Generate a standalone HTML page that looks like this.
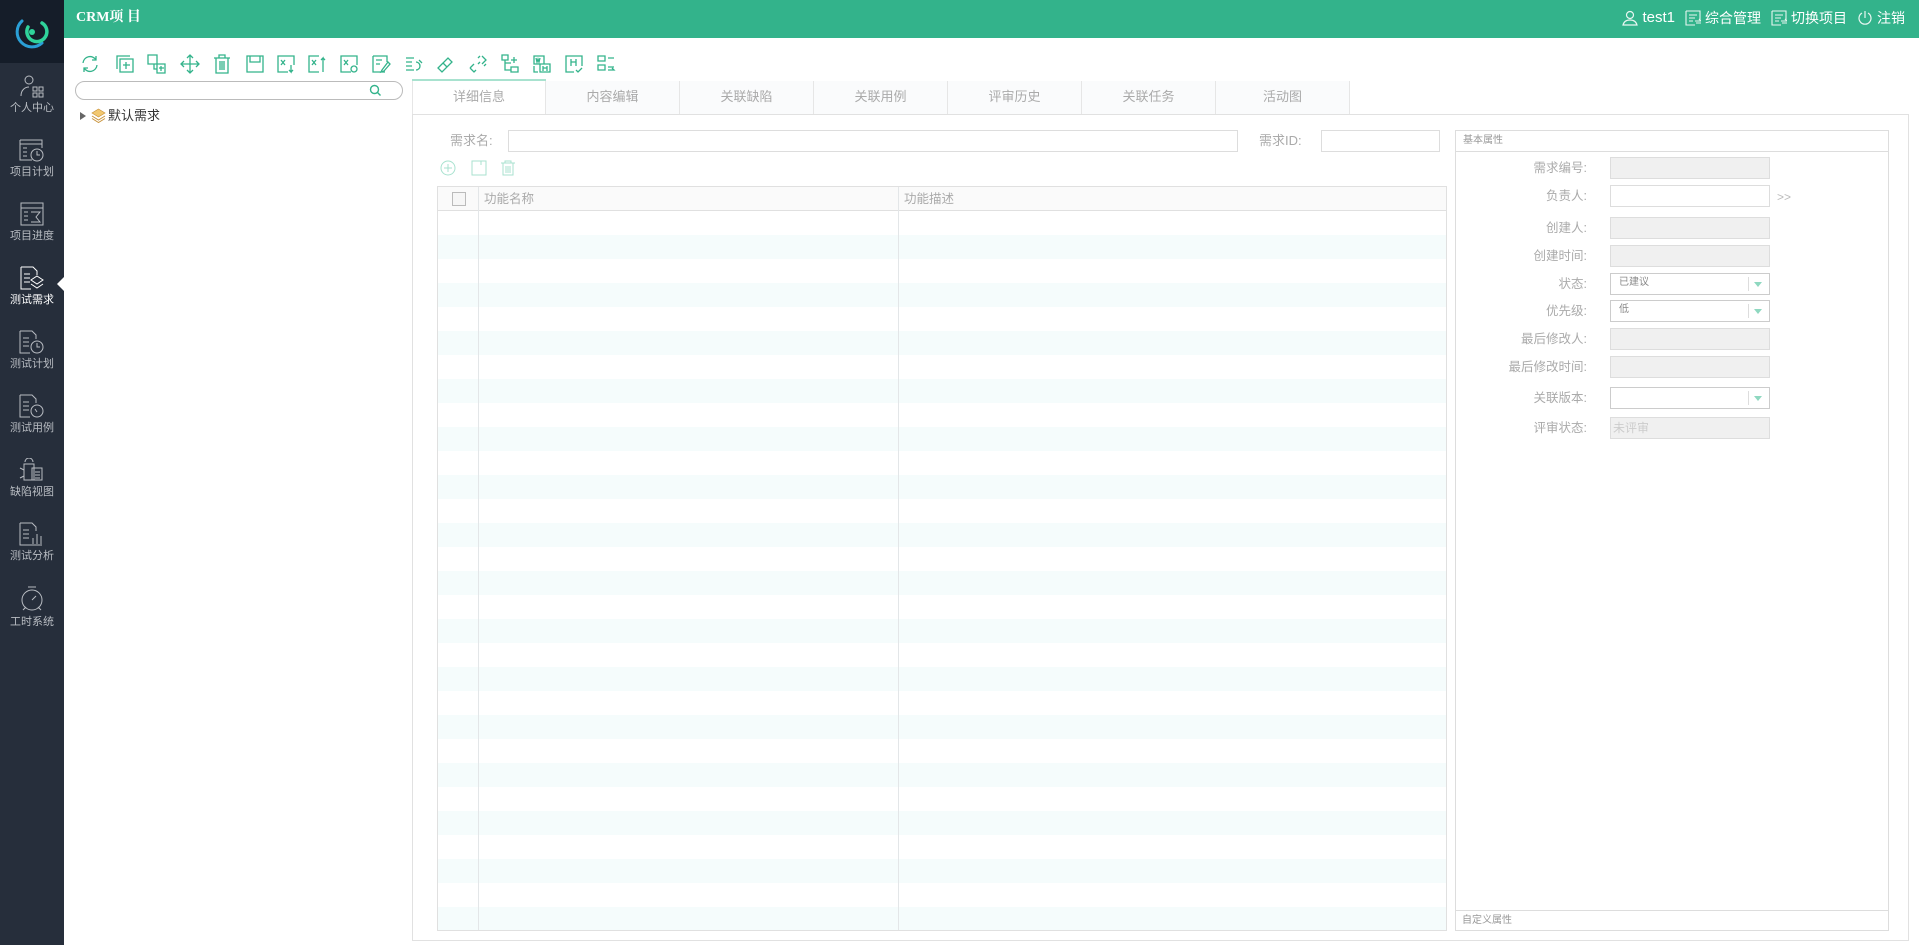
<!DOCTYPE html>
<html><head><meta charset="utf-8"><style>
*{margin:0;padding:0;box-sizing:border-box}
body{width:1919px;height:945px;position:relative;overflow:hidden;background:#fff;font-family:"Liberation Sans","Noto Sans CJK SC",sans-serif;font-size:12px;color:#999}
.a{position:absolute}
#hdr{left:0;top:0;width:1919px;height:38px;background:#33b38b}
#side{left:0;top:0;width:64px;height:945px;background:#262e3b}
#logo{left:0;top:0;width:64px;height:63px;background:#151d29}
.si{position:absolute;left:0;width:64px;text-align:center;color:#b8bcc2;font-size:11px;line-height:14px}
.si svg{display:block;margin:0 auto 3px}
.tb svg{position:absolute;top:54px}
.tab{position:absolute;top:81px;height:33px;width:134px;border-right:1px solid #e6e6e6;background:#fafbfc;text-align:center;line-height:31px;color:#aaa;font-size:13px}
.lab{position:absolute;text-align:right;width:120px;color:#aaa;font-size:12.5px;line-height:16px}
.inp{position:absolute;left:1610px;width:160px;height:22px;border:1px solid #ddd;background:#f0f0f0}
.sel{background:#fff;border-color:#ccc;font-size:10px;color:#888;padding-left:8px;line-height:18px}
.sel:after{content:"";position:absolute;right:0;top:3px;width:20px;height:14px;border-left:1px solid #ddd}
.sel i{position:absolute;right:7px;top:8px;border-left:4px solid transparent;border-right:4px solid transparent;border-top:5px solid #8fd8c0}
</style></head><body>
<div id="hdr" class="a"></div>
<div class="a" style="left:76px;top:9px;color:#fff;font-weight:bold;font-size:14px;line-height:18px;font-family:'Liberation Serif','Noto Serif CJK SC',serif">CRM项 目</div>
<div class="a" style="right:14px;top:9px;color:#fff;font-size:14px;line-height:18px;display:flex;align-items:center;gap:4px;white-space:nowrap">
<svg width="16" height="16" viewBox="0 0 16 16" fill="none" stroke="#e8f6f1" stroke-width="1.2"><circle cx="8" cy="5" r="3.5"/><path d="M1 15c1-4 4-5 7-5s6 1 7 5z"/></svg><span style="font-size:15px">test1</span>
<svg style="margin-left:6px" width="16" height="16" viewBox="0 0 16 16" fill="none" stroke="#e8f6f1" stroke-width="1.1"><path d="M1 1h14v9M1 1v14h9M4 5h8M4 8h6M4 11h4M10 11h6l-2-2M16 13h-5"/></svg><span>综合管理</span>
<svg style="margin-left:6px" width="16" height="16" viewBox="0 0 16 16" fill="none" stroke="#e8f6f1" stroke-width="1.1"><path d="M1 1h14v9M1 1v14h9M4 5h8M4 8h6M4 11h4M10 11h6l-2-2M16 13h-5"/></svg><span>切换项目</span>
<svg style="margin-left:6px" width="16" height="16" viewBox="0 0 16 16" fill="none" stroke="#e8f6f1" stroke-width="1.2"><path d="M5 3a6 6 0 1 0 6 0M8 1v7"/></svg><span>注销</span></div>

<div id="side" class="a"></div>
<div id="logo" class="a"><svg style="position:absolute;left:14px;top:13px" width="36" height="36" viewBox="0 0 36 36" fill="none" stroke-linecap="round"><path d="M8 8a14 14 0 0 0 20 22" stroke="#2a9fd6" stroke-width="3"/><path d="M28 10a10 10 0 1 1-14 4" stroke="#2fd39b" stroke-width="3.5"/><circle cx="18" cy="19" r="3" fill="#2fd39b" stroke="none"/></svg></div>
<div class="si" style="top:74px"><svg width="24" height="24" viewBox="0 0 24 24" fill="none" stroke="#b8bcc2"><circle cx="9" cy="6" r="4"/><path d="M1 22c0-6 4-9 8-9M13 13h4v4h-4zM19 13h4v4h-4zM13 19h4v4h-4zM19 19h4v4h-4z"/></svg>个人中心</div>
<div class="si" style="top:138px"><svg width="26" height="24" viewBox="0 0 26 24" fill="none" stroke="#b8bcc2"><path d="M1 2h22v8M1 2v20h12M1 6h22M4 10h4M4 14h4M4 18h4"/><circle cx="18" cy="17" r="6"/><path d="M18 13v4h3"/></svg>项目计划</div>
<div class="si" style="top:202px"><svg width="24" height="24" viewBox="0 0 24 24" fill="none" stroke="#b8bcc2"><path d="M1 1h22v22H1zM1 6h22M4 10h4M4 14h4M4 18h4M11 10h9l-4 5 4 5h-9"/></svg>项目进度</div>
<div class="si" style="top:266px;color:#fff"><svg width="24" height="24" viewBox="0 0 24 24" fill="none" stroke="#fff"><path d="M1 1h12l4 4v4M1 1v22h10M4 8h6M4 12h6M4 16h6M17 10l6 4-6 4-6-4zM11 18l6 4 6-4"/></svg>测试需求</div>
<div class="a" style="left:57px;top:277px;border-top:7px solid transparent;border-bottom:7px solid transparent;border-right:7px solid #fff"></div>
<div class="si" style="top:330px"><svg width="26" height="24" viewBox="0 0 26 24" fill="none" stroke="#b8bcc2"><path d="M1 1h12l4 4v4M1 1v22h10M4 8h6M4 12h6M4 16h6"/><circle cx="18" cy="17" r="6"/><path d="M18 13v4h3"/></svg>测试计划</div>
<div class="si" style="top:394px"><svg width="26" height="24" viewBox="0 0 26 24" fill="none" stroke="#b8bcc2"><path d="M1 1h12l4 4v4M1 1v22h10M4 8h6M4 12h6M4 16h6"/><circle cx="18" cy="17" r="6"/><path d="M16 15l2 3"/></svg>测试用例</div>
<div class="si" style="top:458px"><svg width="26" height="24" viewBox="0 0 26 24" fill="none" stroke="#b8bcc2"><path d="M6 4a4 4 0 0 1 8 0M5 6h10v16H5zM1 10l4 2M1 20l4-2M13 10h10v12H13zM16 14h5M16 17h5M16 20h5"/></svg>缺陷视图</div>
<div class="si" style="top:522px"><svg width="26" height="24" viewBox="0 0 26 24" fill="none" stroke="#b8bcc2"><path d="M1 1h12l4 4v4M1 1v22h22M4 8h6M4 12h6M4 16h6M14 22v-6M18 22V12M22 22v-8"/></svg>测试分析</div>
<div class="si" style="top:586px"><svg width="26" height="26" viewBox="0 0 26 26" fill="none" stroke="#b8bcc2"><circle cx="13" cy="14" r="10"/><path d="M13 14l4-4M9 1h8M4 24l3-3M22 24l-3-3"/></svg>工时系统</div>

<div class="tb" style="position:absolute;left:0;top:0">
<svg style="left:80px" width="20" height="20" viewBox="0 0 20 20" fill="none" stroke="#33b38b" stroke-width="1.3"><path d="M3 9a7 7 0 0 1 13-3M17 11a7 7 0 0 1-13 3M16 2v4h-4M4 18v-4h4"/></svg>
<svg style="left:115px" width="20" height="20" viewBox="0 0 20 20" fill="none" stroke="#33b38b" stroke-width="1.3"><path d="M2 15V2h13M5 5h13v13H5zM11 8v7M8 11h7"/></svg>
<svg style="left:147px" width="20" height="20" viewBox="0 0 20 20" fill="none" stroke="#33b38b" stroke-width="1.3"><path d="M1 1h9v9H1zM10 10h8v9h-8zM14 12v5M12 14h5M7 10v5h3"/></svg>
<svg style="left:180px" width="20" height="20" viewBox="0 0 20 20" fill="none" stroke="#33b38b" stroke-width="1.3"><path d="M10 1v18M1 10h18M7 4l3-3 3 3M7 16l3 3 3-3M4 7l-3 3 3 3M16 7l3 3-3 3"/></svg>
<svg style="left:212px" width="20" height="20" viewBox="0 0 20 20" fill="none" stroke="#33b38b" stroke-width="1.3"><path d="M2 4h16M7 4V1h6v3M4 4v15h12V4M8 7v9M10 7v9M12 7v9"/></svg>
<svg style="left:245px" width="20" height="20" viewBox="0 0 20 20" fill="none" stroke="#33b38b" stroke-width="1.3"><path d="M2 2h16v16H2zM5 2v6h10V2"/></svg>
<svg style="left:276px" width="20" height="20" viewBox="0 0 20 20" fill="none" stroke="#33b38b" stroke-width="1.3"><path d="M12 18H2V2h16v9M5 6l4 5M9 6l-4 5M15 11v7l-2-2M15 18l2-2"/></svg>
<svg style="left:307px" width="20" height="20" viewBox="0 0 20 20" fill="none" stroke="#33b38b" stroke-width="1.3"><path d="M12 18H2V2h10M5 6l4 5M9 6l-4 5M16 18V4l-2 2M16 4l2 2"/></svg>
<svg style="left:339px" width="20" height="20" viewBox="0 0 20 20" fill="none" stroke="#33b38b" stroke-width="1.3"><path d="M12 18H2V2h16v9M5 6l4 5M9 6l-4 5"/><circle cx="15" cy="15" r="3"/></svg>
<svg style="left:371px" width="20" height="20" viewBox="0 0 20 20" fill="none" stroke="#33b38b" stroke-width="1.3"><path d="M2 2h14v6M2 2v16h12M5 6h6M5 10h4M11 16l6-8 2 2-6 7-3 1z"/></svg>
<svg style="left:404px" width="20" height="20" viewBox="0 0 20 20" fill="none" stroke="#33b38b" stroke-width="1.3"><path d="M2 4h8M2 8h6M2 12h6M2 16h8M12 8a4 4 0 1 1 0 8M15 6l3 3"/></svg>
<svg style="left:436px" width="20" height="20" viewBox="0 0 20 20" fill="none" stroke="#33b38b" stroke-width="1.3"><path d="M2 14l10-10 4 4-10 10zM7 9l4 4"/></svg>
<svg style="left:468px" width="20" height="20" viewBox="0 0 20 20" fill="none" stroke="#33b38b" stroke-width="1.3"><path d="M2 14l4-4M8 16l-2 2-4-4M14 2l4 4-4 4M12 8l-2 2M10 4l2-2M16 12l2-2"/></svg>
<svg style="left:500px" width="20" height="20" viewBox="0 0 20 20" fill="none" stroke="#33b38b" stroke-width="1.3"><path d="M2 1h6v5H2zM5 6v10h6M11 13h7v5h-7zM5 9h6M14 3v6M11 6h6"/></svg>
<svg style="left:532px" width="20" height="20" viewBox="0 0 20 20" fill="none" stroke="#33b38b" stroke-width="1.3"><path d="M2 2h10v8H2zM8 10v8h10v-8zM4 4l1 4 1-3 1 3 1-4M11 12v5M15 12v5M11 14h4M2 12v6h4"/></svg>
<svg style="left:564px" width="20" height="20" viewBox="0 0 20 20" fill="none" stroke="#33b38b" stroke-width="1.3"><path d="M10 18H2V2h16v10M7 5v7M12 5v7M7 8h5M12 16l2 2 4-4"/></svg>
<svg style="left:596px" width="20" height="20" viewBox="0 0 20 20" fill="none" stroke="#33b38b" stroke-width="1.3"><path d="M2 2h7v5H2zM2 11h7v5H2zM12 4h6M12 13h6M12 16h6l-2-2"/></svg>
</div>

<div class="a" style="left:75px;top:81px;width:328px;height:19px;border:1px solid #bbb;border-radius:10px"></div>
<svg class="a" style="left:369px;top:84px" width="13" height="13" viewBox="0 0 13 13" fill="none" stroke="#33b38b" stroke-width="1.4"><circle cx="5.5" cy="5.5" r="4"/><path d="M8.5 8.5l3 3"/></svg>
<div class="a" style="left:80px;top:112px;border-top:4px solid transparent;border-bottom:4px solid transparent;border-left:6px solid #666"></div>
<svg class="a" style="left:91px;top:108px" width="15" height="15" viewBox="0 0 15 15"><path d="M7.5 1l6.5 4-6.5 4L1 5z" fill="#f2c870" stroke="#c9943d" stroke-width=".7"/><path d="M1 8l6.5 4 6.5-4M1 10.5l6.5 4 6.5-4" fill="none" stroke="#c9943d"/></svg>
<div class="a" style="left:108px;top:108px;color:#333;font-size:13px;line-height:16px">默认需求</div>

<div class="a" style="left:412px;top:79px;width:134px;height:3px;background:#a8e2cf"></div>
<div class="tab" style="left:412px;background:#fff;border-left:1px solid #e6e6e6">详细信息</div>
<div class="tab" style="left:546px">内容编辑</div>
<div class="tab" style="left:680px">关联缺陷</div>
<div class="tab" style="left:814px">关联用例</div>
<div class="tab" style="left:948px">评审历史</div>
<div class="tab" style="left:1082px">关联任务</div>
<div class="tab" style="left:1216px">活动图</div>
<div class="a" style="left:412px;top:114px;width:1497px;height:827px;border:1px solid #e1e1e1"></div>

<div class="a" style="left:450px;top:133px;font-size:13px;color:#aaa;line-height:16px">需求名:</div>
<div class="a" style="left:508px;top:130px;width:730px;height:22px;border:1px solid #ddd"></div>
<div class="a" style="left:1259px;top:133px;font-size:13px;color:#aaa;line-height:16px">需求ID:</div>
<div class="a" style="left:1321px;top:130px;width:119px;height:22px;border:1px solid #ddd"></div>
<svg class="a" style="left:440px;top:160px" width="16" height="16" viewBox="0 0 16 16" fill="none" stroke="#a8e2cf"><circle cx="8" cy="8" r="7"/><path d="M8 4v8M4 8h8"/></svg>
<svg class="a" style="left:471px;top:160px" width="16" height="16" viewBox="0 0 16 16" fill="none" stroke="#a8e2cf"><path d="M1 1h14v14H1zM10 1v4"/></svg>
<svg class="a" style="left:500px;top:160px" width="16" height="16" viewBox="0 0 16 16" fill="none" stroke="#a8e2cf"><path d="M1 3h14M5 3V1h6v2M3 3v12h10V3M6 6v7M8 6v7M10 6v7"/></svg>

<div class="a" style="left:437px;top:186px;width:1010px;height:745px;border:1px solid #e0e0e0;overflow:hidden;background:repeating-linear-gradient(#fff 0 24px,#f5fcfc 24px 48px);background-position:0 24px">
<div class="a" style="left:0;top:0;width:1010px;height:24px;background:#fafafa;border-bottom:1px solid #e0e0e0"></div>
<div class="a" style="left:14px;top:5px;width:14px;height:14px;border:1px solid #bbb;background:#f6f6f6"></div>
<div class="a" style="left:40px;top:0;width:1px;height:745px;background:#e3e6e8"></div>
<div class="a" style="left:460px;top:0;width:1px;height:745px;background:#e3e6e8"></div>
<div class="a" style="left:46px;top:4px;color:#aaa;font-size:12.5px;line-height:16px">功能名称</div>
<div class="a" style="left:466px;top:4px;color:#aaa;font-size:12.5px;line-height:16px">功能描述</div>
</div>

<div class="a" style="left:1455px;top:130px;width:434px;height:801px;border:1px solid #ddd"></div>
<div class="a" style="left:1455px;top:130px;width:434px;height:22px;border:1px solid #ddd;font-size:10px;color:#999;padding:4px 0 0 7px;line-height:12px">基本属性</div>
<div class="a" style="left:1455px;top:910px;width:434px;height:21px;border-top:1px solid #ddd;font-size:10px;color:#999;padding:4px 0 0 7px;line-height:12px">自定义属性</div>

<div class="lab" style="left:1467px;top:160px">需求编号:</div><div class="inp" style="top:157px"></div>
<div class="lab" style="left:1467px;top:188px">负责人:</div><div class="inp" style="top:185px;background:#fff"></div><div class="a" style="left:1777px;top:190px;color:#bbb">&gt;&gt;</div>
<div class="lab" style="left:1467px;top:220px">创建人:</div><div class="inp" style="top:217px"></div>
<div class="lab" style="left:1467px;top:248px">创建时间:</div><div class="inp" style="top:245px"></div>
<div class="lab" style="left:1467px;top:276px">状态:</div><div class="inp sel" style="top:273px">已建议<i></i></div>
<div class="lab" style="left:1467px;top:303px">优先级:</div><div class="inp sel" style="top:300px">低<i></i></div>
<div class="lab" style="left:1467px;top:331px">最后修改人:</div><div class="inp" style="top:328px"></div>
<div class="lab" style="left:1467px;top:359px">最后修改时间:</div><div class="inp" style="top:356px"></div>
<div class="lab" style="left:1467px;top:390px">关联版本:</div><div class="inp sel" style="top:387px"><i></i></div>
<div class="lab" style="left:1467px;top:420px">评审状态:</div><div class="inp" style="top:417px;color:#ccc;font-size:12px;padding-left:2px;line-height:20px">未评审</div>
</body></html>
